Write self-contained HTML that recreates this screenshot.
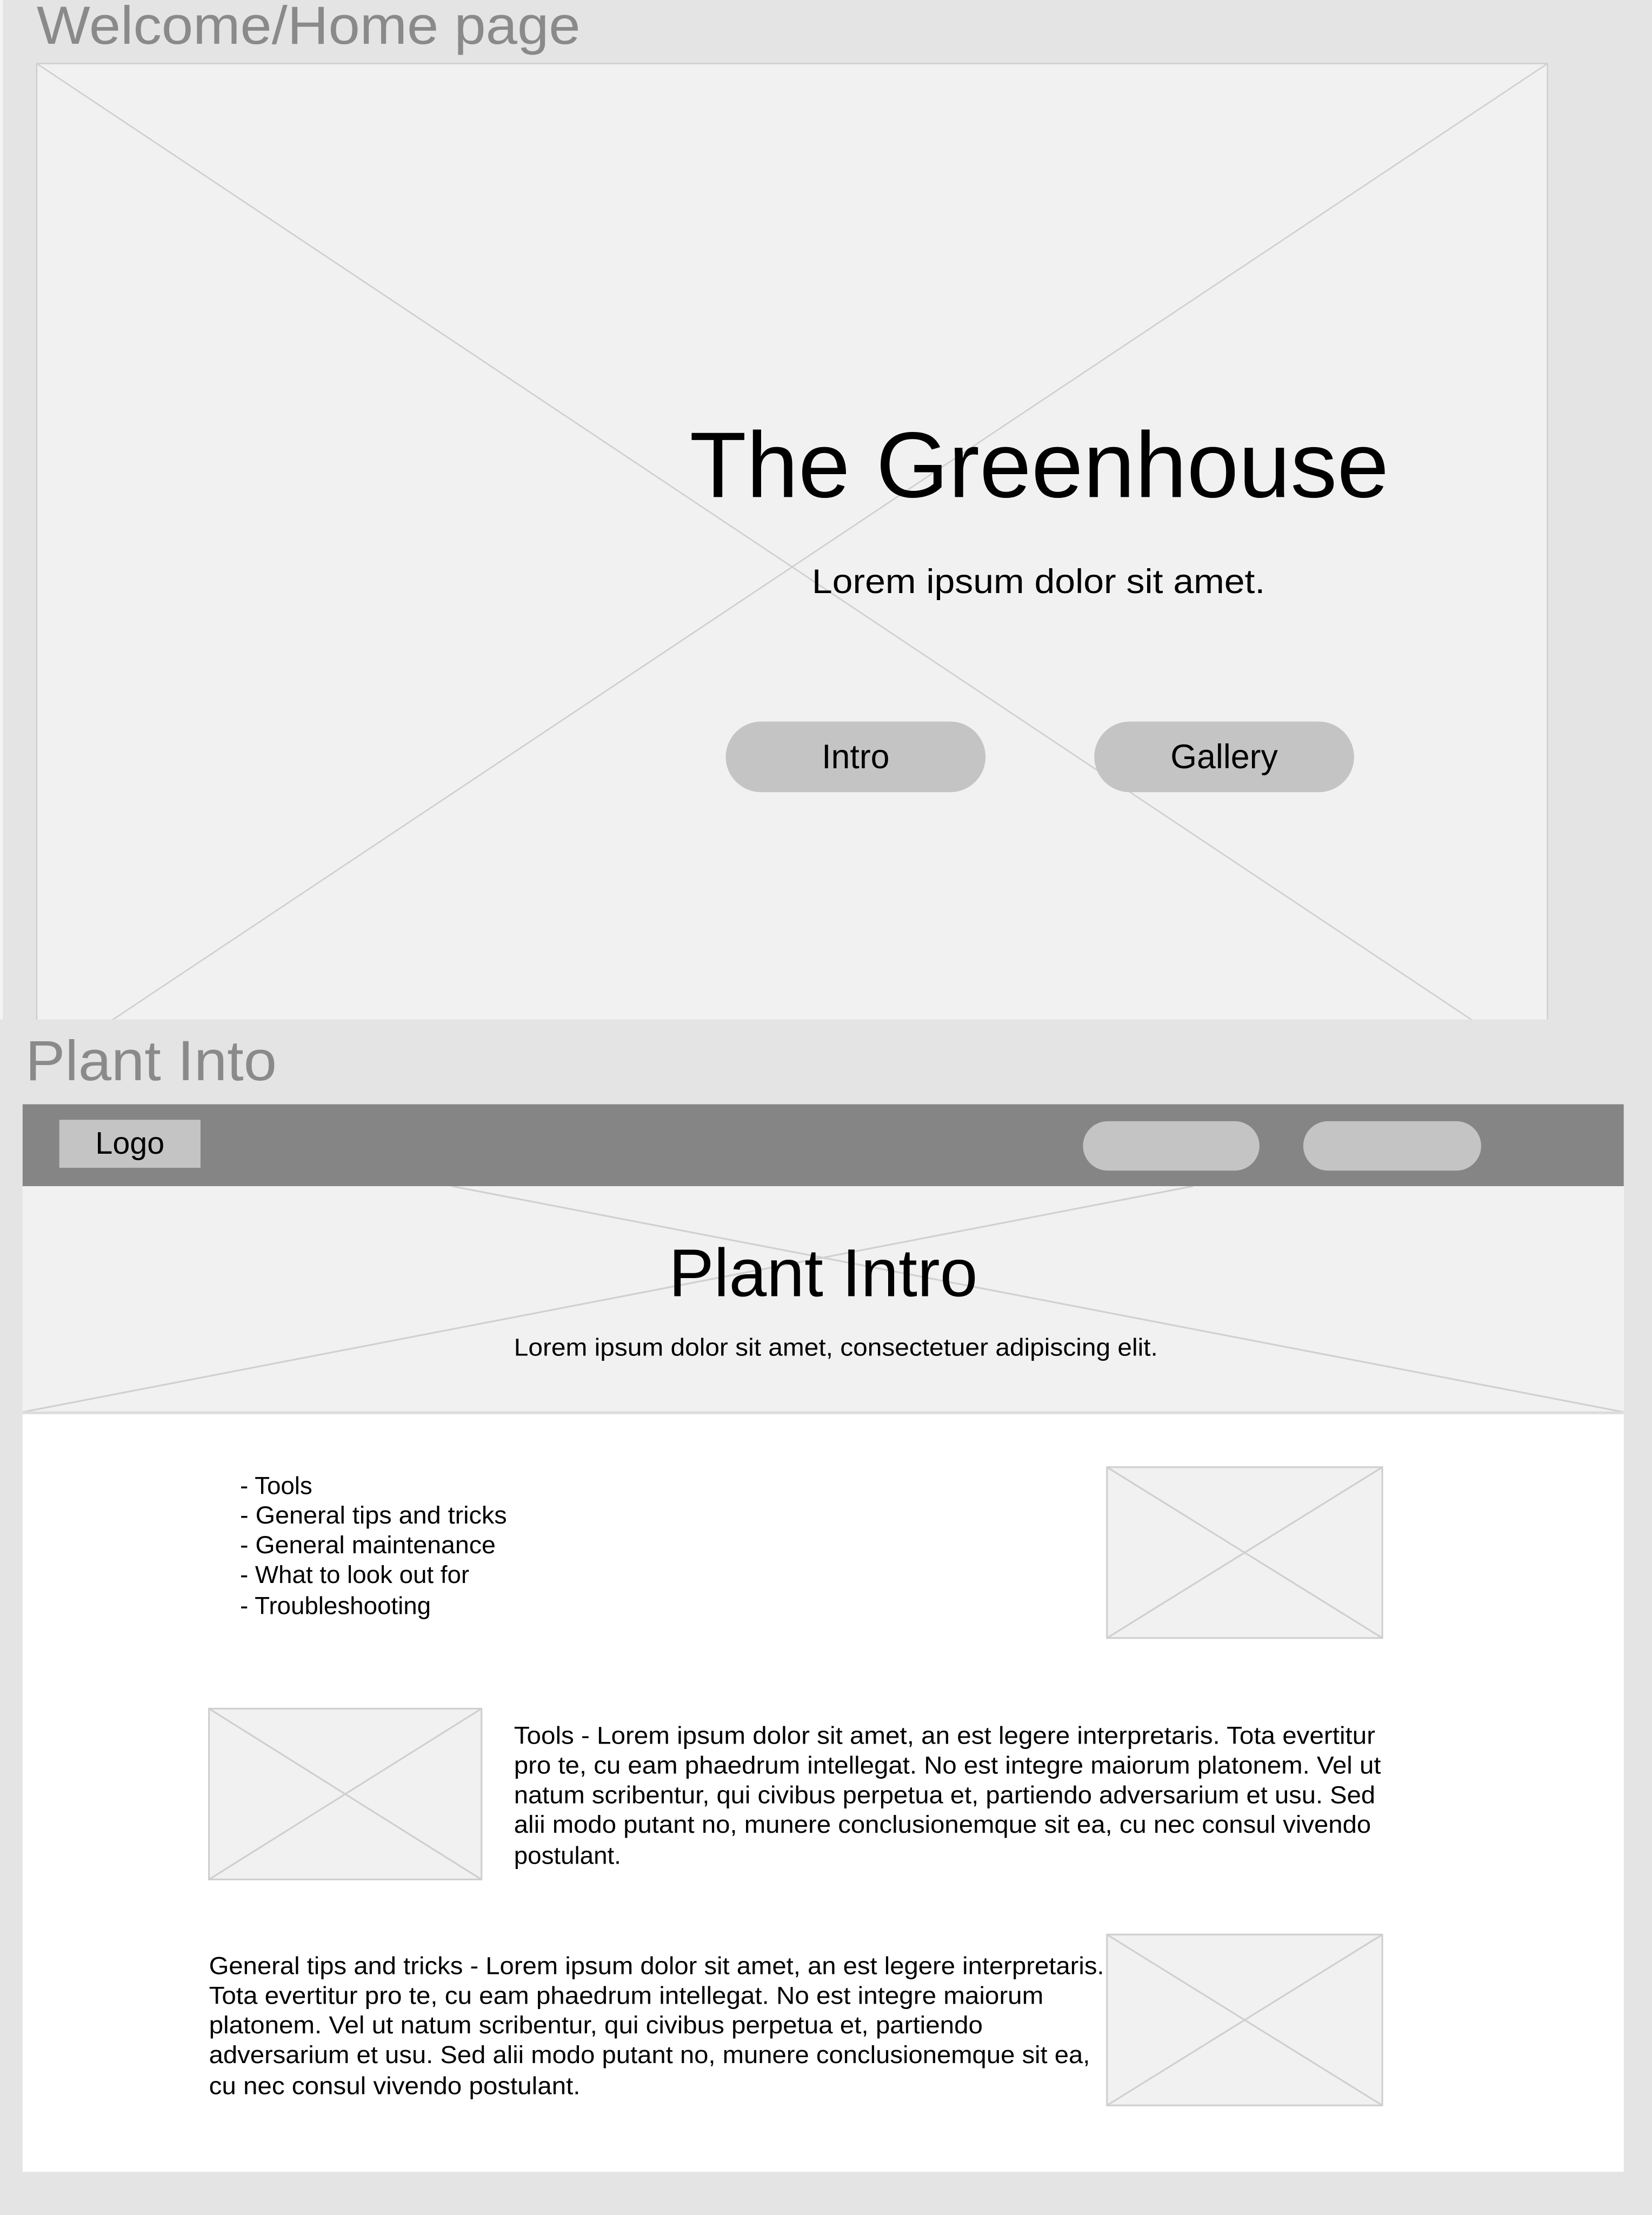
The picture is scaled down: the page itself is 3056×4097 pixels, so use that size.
<!DOCTYPE html>
<html><head><meta charset="utf-8"><style>
html,body{margin:0;padding:0;background:#e4e4e4;}
svg{display:block;}
text{font-family:"Liberation Sans",sans-serif;}
</style></head><body>
<svg width="3056" height="4097" viewBox="0 0 1170 1568.6" preserveAspectRatio="none" xmlns="http://www.w3.org/2000/svg">
<rect x="0" y="0" width="1170" height="1568.6" fill="#e4e4e4"/>
<rect x="0" y="0" width="2" height="722" fill="#f4f4f4"/>
<rect x="26" y="45" width="1070" height="713" fill="#f1f1f1" stroke="#cfcfcf" stroke-width="1"/>
<line x1="26" y1="45" x2="1096" y2="758" stroke="#cfcfcf" stroke-width="1"/>
<line x1="1096" y1="45" x2="26" y2="758" stroke="#cfcfcf" stroke-width="1"/>
<text x="26" y="31" font-size="38" fill="#8a8a8a" textLength="385" lengthAdjust="spacingAndGlyphs">Welcome/Home page</text>
<text x="736" y="352" font-size="66" fill="#000" text-anchor="middle">The Greenhouse</text>
<text x="575" y="420" font-size="24" fill="#000" textLength="321" lengthAdjust="spacingAndGlyphs">Lorem ipsum dolor sit amet.</text>
<rect x="514" y="511" width="184" height="50" rx="25" fill="#c4c4c4"/>
<rect x="775" y="511" width="184" height="50" rx="25" fill="#c4c4c4"/>
<text x="606" y="544" font-size="24" fill="#000" text-anchor="middle">Intro</text>
<text x="867" y="544" font-size="24" fill="#000" text-anchor="middle">Gallery</text>
<rect x="0" y="722" width="1170" height="847" fill="#e4e4e4"/>
<text x="18" y="765" font-size="40" fill="#8a8a8a" textLength="178" lengthAdjust="spacingAndGlyphs">Plant Into</text>
<rect x="16" y="782" width="1134" height="756" fill="#ffffff"/>
<rect x="16" y="840" width="1134" height="160" fill="#f1f1f1"/>
<line x1="320" y1="840" x2="1150" y2="1000" stroke="#d0d0d0" stroke-width="1.2"/>
<line x1="16" y1="1000" x2="845" y2="840" stroke="#d0d0d0" stroke-width="1.2"/>
<line x1="16" y1="1000.5" x2="1150" y2="1000.5" stroke="#dcdcdc" stroke-width="2"/>
<rect x="16" y="782" width="1134" height="58" fill="#858585"/>
<rect x="42" y="793" width="100" height="34" fill="#c4c4c4"/>
<text x="92" y="817" font-size="22" fill="#000" text-anchor="middle">Logo</text>
<rect x="767" y="794" width="125" height="35" rx="17.5" fill="#c4c4c4"/>
<rect x="923" y="794" width="126" height="35" rx="17.5" fill="#c4c4c4"/>
<text x="583" y="918" font-size="48" fill="#000" text-anchor="middle">Plant Intro</text>
<text x="364" y="960" font-size="17.5" fill="#000" textLength="456" lengthAdjust="spacingAndGlyphs">Lorem ipsum dolor sit amet, consectetuer adipiscing elit.</text>
<g font-size="17.5" fill="#000">
<text x="170" y="1058">- Tools</text>
<text x="170" y="1079" textLength="189" lengthAdjust="spacingAndGlyphs">- General tips and tricks</text>
<text x="170" y="1100" textLength="181" lengthAdjust="spacingAndGlyphs">- General maintenance</text>
<text x="170" y="1121">- What to look out for</text>
<text x="170" y="1143">- Troubleshooting</text>
</g>
<g fill="#f1f1f1" stroke="#cfcfcf" stroke-width="1.2">
<rect x="784" y="1039" width="195" height="121"/>
<line x1="784" y1="1039" x2="979" y2="1160"/><line x1="979" y1="1039" x2="784" y2="1160"/>
<rect x="148" y="1210" width="193" height="121"/>
<line x1="148" y1="1210" x2="341" y2="1331"/><line x1="341" y1="1210" x2="148" y2="1331"/>
<rect x="784" y="1370" width="195" height="121"/>
<line x1="784" y1="1370" x2="979" y2="1491"/><line x1="979" y1="1370" x2="784" y2="1491"/>
</g>
<g font-size="17.5" fill="#000">
<text x="364" y="1235" textLength="610" lengthAdjust="spacingAndGlyphs">Tools - Lorem ipsum dolor sit amet, an est legere interpretaris. Tota evertitur</text>
<text x="364" y="1256" textLength="614" lengthAdjust="spacingAndGlyphs">pro te, cu eam phaedrum intellegat. No est integre maiorum platonem. Vel ut</text>
<text x="364" y="1277" textLength="610" lengthAdjust="spacingAndGlyphs">natum scribentur, qui civibus perpetua et, partiendo adversarium et usu. Sed</text>
<text x="364" y="1298" textLength="607" lengthAdjust="spacingAndGlyphs">alii modo putant no, munere conclusionemque sit ea, cu nec consul vivendo</text>
<text x="364" y="1320">postulant.</text>
<text x="148" y="1398" textLength="634" lengthAdjust="spacingAndGlyphs">General tips and tricks - Lorem ipsum dolor sit amet, an est legere interpretaris.</text>
<text x="148" y="1419" textLength="591" lengthAdjust="spacingAndGlyphs">Tota evertitur pro te, cu eam phaedrum intellegat. No est integre maiorum</text>
<text x="148" y="1440" textLength="548" lengthAdjust="spacingAndGlyphs">platonem. Vel ut natum scribentur, qui civibus perpetua et, partiendo</text>
<text x="148" y="1461" textLength="624" lengthAdjust="spacingAndGlyphs">adversarium et usu. Sed alii modo putant no, munere conclusionemque sit ea,</text>
<text x="148" y="1483" textLength="263" lengthAdjust="spacingAndGlyphs">cu nec consul vivendo postulant.</text>
</g>
</svg>
</body></html>
